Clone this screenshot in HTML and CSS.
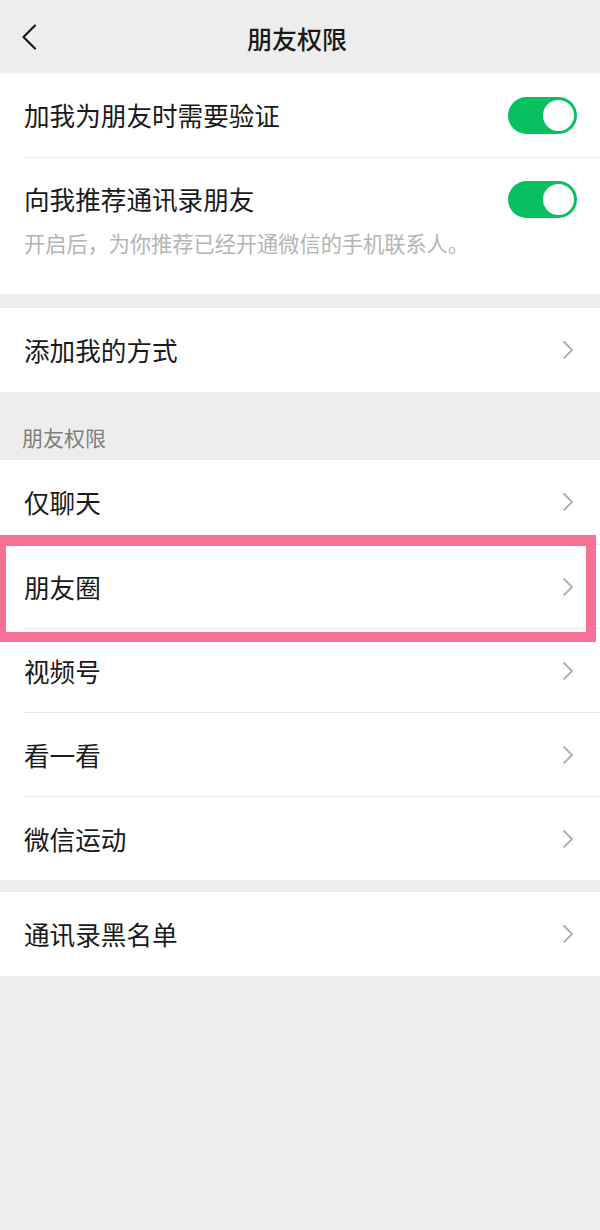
FILE: index.html
```html
<!DOCTYPE html>
<html lang="zh-CN">
<head>
<meta charset="utf-8">
<title>朋友权限</title>
<link rel="stylesheet" href="styles.css">
</head>
<body>
<div class="page">
  <header class="navbar">
    <div class="nav-left">
      <svg class="back" width="16" height="26" viewBox="0 0 16 26"><path d="M14 1.5 L2.5 13 L14 24.5" fill="none" stroke="#1a1a1a" stroke-width="2.2" stroke-linecap="round" stroke-linejoin="round"/></svg>
    </div>
    <h1 class="title">朋友权限</h1>
    <div class="nav-right"></div>
  </header>

  <section class="group first-group">
    <div class="cell">
      <span class="cell-text">加我为朋友时需要验证</span>
      <span class="switch"><span class="knob"></span></span>
    </div>
    <div class="cell cell-tall">
      <div class="cell-line">
        <span class="cell-text">向我推荐通讯录朋友</span>
        <span class="switch"><span class="knob"></span></span>
      </div>
      <p class="hint">开启后，为你推荐已经开通微信的手机联系人。</p>
    </div>
  </section>

  <section class="group gap">
    <div class="cell">
      <span class="cell-text">添加我的方式</span>
      <svg class="arrow" width="12" height="20" viewBox="0 0 12 20"><path d="M1.5 1.5 L10 10 L1.5 18.5" fill="none" stroke="#b2b2b2" stroke-width="2" stroke-linejoin="round"/></svg>
    </div>
  </section>

  <div class="section-label">朋友权限</div>

  <section class="group">
    <div class="cell">
      <span class="cell-text">仅聊天</span>
      <svg class="arrow" width="12" height="20" viewBox="0 0 12 20"><path d="M1.5 1.5 L10 10 L1.5 18.5" fill="none" stroke="#b2b2b2" stroke-width="2" stroke-linejoin="round"/></svg>
    </div>
    <div class="cell marked">
      <span class="cell-text">朋友圈</span>
      <svg class="arrow" width="12" height="20" viewBox="0 0 12 20"><path d="M1.5 1.5 L10 10 L1.5 18.5" fill="none" stroke="#b2b2b2" stroke-width="2" stroke-linejoin="round"/></svg>
      <span class="highlight"></span>
    </div>
    <div class="cell">
      <span class="cell-text">视频号</span>
      <svg class="arrow" width="12" height="20" viewBox="0 0 12 20"><path d="M1.5 1.5 L10 10 L1.5 18.5" fill="none" stroke="#b2b2b2" stroke-width="2" stroke-linejoin="round"/></svg>
    </div>
    <div class="cell">
      <span class="cell-text">看一看</span>
      <svg class="arrow" width="12" height="20" viewBox="0 0 12 20"><path d="M1.5 1.5 L10 10 L1.5 18.5" fill="none" stroke="#b2b2b2" stroke-width="2" stroke-linejoin="round"/></svg>
    </div>
    <div class="cell">
      <span class="cell-text">微信运动</span>
      <svg class="arrow" width="12" height="20" viewBox="0 0 12 20"><path d="M1.5 1.5 L10 10 L1.5 18.5" fill="none" stroke="#b2b2b2" stroke-width="2" stroke-linejoin="round"/></svg>
    </div>
  </section>

  <section class="group gap-small">
    <div class="cell">
      <span class="cell-text">通讯录黑名单</span>
      <svg class="arrow" width="12" height="20" viewBox="0 0 12 20"><path d="M1.5 1.5 L10 10 L1.5 18.5" fill="none" stroke="#b2b2b2" stroke-width="2" stroke-linejoin="round"/></svg>
    </div>
  </section>
</div>
</body>
</html>
```

FILE: styles.css
```css
* {
  box-sizing: border-box;
}

html, body {
  margin: 0;
  padding: 0;
  background: #ededed;
}

body {
  font-family: "Noto Sans CJK SC", "Noto Sans", sans-serif;
  color: #191919;
}

.page {
  width: 600px;
  min-height: 1230px;
  background: #ededed;
}

.navbar {
  height: 73px;
  display: grid;
  grid-template-columns: 1fr auto 1fr;
  align-items: center;
  background: #ededed;
}

.nav-left {
  display: flex;
  align-items: center;
  padding-left: 21px;
}

.back {
  display: block;
  margin-top: 1px;
}

.title {
  margin: 0;
  font-size: 25px;
  font-weight: 500;
  line-height: 36px;
  color: #1a1a1a;
  padding-top: 2px;
  padding-right: 6px;
}

.group {
  background: #fff;
  padding-left: 24px;
}

.gap {
  margin-top: 14px;
}

.gap-small {
  margin-top: 12px;
}

.cell {
  height: 84px;
  display: flex;
  align-items: center;
  justify-content: space-between;
  padding-right: 23px;
}

.cell + .cell {
  border-top: 1px solid #e8e8e8;
}

.cell-text {
  font-size: 25.6px;
  line-height: 40px;
  color: #191919;
}

.cell-tall {
  height: 137px;
  display: block;
  padding-top: 21px;
}

.cell-line {
  display: flex;
  align-items: center;
  justify-content: space-between;
  height: 40px;
}

.hint {
  margin: 8px 0 0;
  font-size: 21.2px;
  line-height: 32px;
  color: #b4b4b4;
}

.switch {
  width: 69px;
  height: 37px;
  border-radius: 19px;
  background: #07c160;
  display: flex;
  align-items: center;
  justify-content: flex-end;
  padding-right: 3px;
}

.knob {
  width: 31px;
  height: 31px;
  border-radius: 50%;
  background: #fff;
}

.arrow {
  display: block;
  margin-right: 3px;
}

.section-label {
  padding: 31px 22px 9px;
  font-size: 21px;
  line-height: 28px;
  color: #7f7f7f;
}

.marked {
  position: relative;
}

.highlight {
  position: absolute;
  top: -10px;
  bottom: -14px;
  left: -24px;
  right: 4px;
  border: 10px solid #f77196;
  border-top-width: 11px;
  border-left-width: 6px;
  pointer-events: none;
}
```
